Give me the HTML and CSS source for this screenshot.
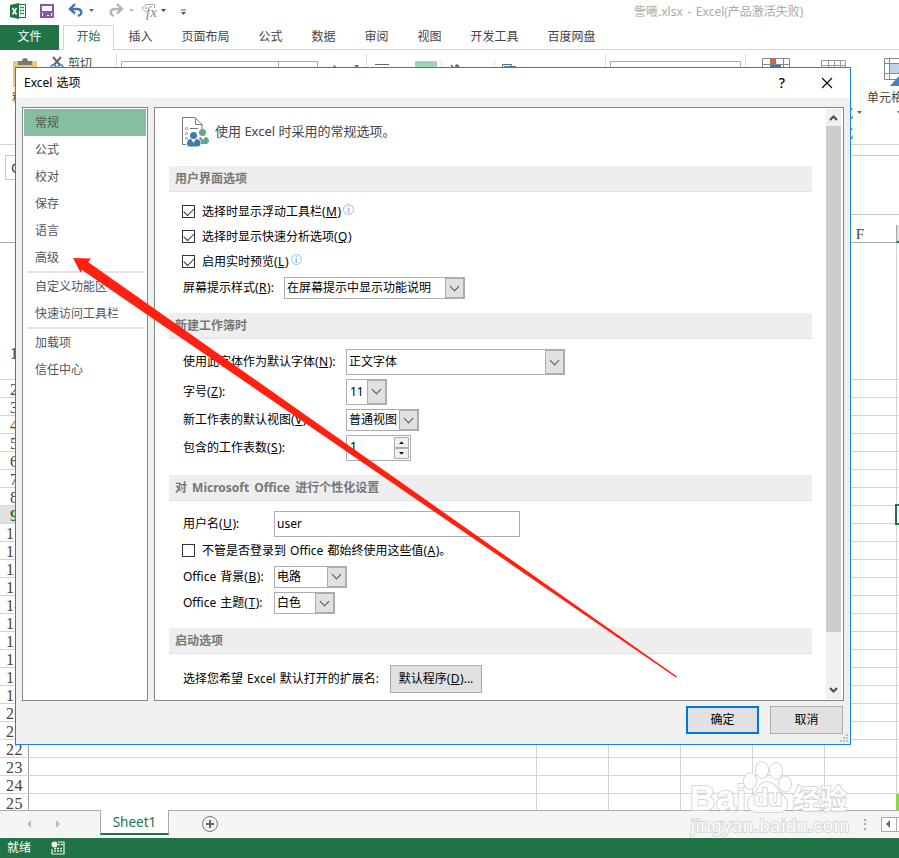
FILE: index.html
```html
<!DOCTYPE html>
<html lang="zh-CN">
<head>
  <meta charset="UTF-8">
  <title>Excel 选项</title>
  <link rel="stylesheet" href="styles.css">
</head>
<body>
  <div class="app">
    <div class="titlebar">
      <svg class="quick-access" width="200" height="25" viewBox="0 0 200 25">
        <!-- excel logo -->
        <path d="M10 5l9-2v16l-9-2z" fill="#217346"/>
        <path d="M12.5 8l4 6.5M16.500 8l-4 6.500" stroke="#fff" stroke-width="1.5"/>
        <path d="M19 4.500h6.500v13H19" fill="#fff" stroke="#217346"/>
        <path d="M20 7.500h4M20 10.500h4M20 13.500h4" stroke="#217346" stroke-width="1.500" stroke-dasharray="1.800 .6"/>
        <!-- save -->
        <path d="M41 5h12v12H41z" fill="#fff" stroke="#8a55ae" stroke-width="2"/>
        <path d="M41 11h12v2H41zM43 13h8v4h-2v-2h-2v2h-4z" fill="#8a55ae"/>
        <!-- undo / redo -->
        <path d="M70 9h7c5 0 6 5 1 7M75 4l-5 5 5 4.500" fill="none" stroke="#3f75b5" stroke-width="2.400"/>
        <path d="M89 9h5l-2.500 3z" fill="#666"/>
        <path d="M122 9h-7c-5 0-6 5-1 7M117 4l5 5-5 4.500" fill="none" stroke="#b5b5b5" stroke-width="2.400"/>
        <path d="M129 9h5l-2.500 3z" fill="#bbb"/>
        <path d="M154.500 8V4.500H146L142 8l4 4h1" fill="none" stroke="#aaa"/>
        <circle cx="146" cy="8" r="1" fill="#aaa"/>
        <text x="146" y="17" class="fx">fx</text>
        <path d="M161 9h5l-2.500 3z" fill="#444"/>
        <path d="M181 10h5" stroke="#555"/>
        <path d="M181 12h5l-2.500 3z" fill="#555"/>
      </svg>
      <span class="doc-title">訾曦.xlsx - Excel(产品激活失败)</span>
    </div>
    <div class="tabs">
      <span class="tab-file">文件</span>
      <span class="tab-active">开始</span>
      <span class="tab">插入</span>
      <span class="tab">页面布局</span>
      <span class="tab">公式</span>
      <span class="tab">数据</span>
      <span class="tab">审阅</span>
      <span class="tab">视图</span>
      <span class="tab">开发工具</span>
      <span class="tab">百度网盘</span>
    </div>
    <svg class="ribbon" width="899" height="94" viewBox="0 0 899 94">
      <path d="M13 11h24v26H13z" fill="#edc57b"/>
      <path d="M18 15v-4h4c0-4 6-4 6 0h4v4z" fill="#777"/>
      <path d="M53 7l7 8M61 7l-7 8" stroke="#666" stroke-width="2"/>
      <path d="M51 17c1-3 4-3 5 0M58 17c1-3 4-3 5 0" fill="none" stroke="#5b8dc5" stroke-width="2"/>
      <text x="68" y="18">剪切</text>
      <text x="12" y="52">粘贴</text>
      <path d="M116.500 4v60M366.500 4v60M441.500 10v60M494.500 10v60M605.500 4v60M745.500 4v60" stroke="#ddd"/>
      <path d="M121.500 30V11.500h196V30M278.500 12v10" fill="none" stroke="#aaa"/>
      <path d="M332 18l2.500-3 2.500 3zM354 15h5l-2 3z" fill="#3f75b5"/>
      <path d="M375 14.500h14" stroke="#666"/>
      <path d="M415 11h22v10h-22z" fill="#9fd5b7"/>
      <path d="M451 15l3 3M455 16l2-1 3 3" stroke="#666" stroke-width="1.500"/>
      <path d="M502.500 20v-5.500h9V20" fill="none" stroke="#666"/>
      <path d="M504 16h12v4h-12z" fill="#4a80bd"/>
      <path d="M610.500 30V11.500h130V30" fill="none" stroke="#aaa"/>
      <path d="M762.500 8.500h27v12h-27zM770.500 9v10M783.500 9v10M763 14.500h26" fill="#fff" stroke="#888"/>
      <path d="M770 9h6v5h-6z" fill="#d9603c"/>
      <path d="M770 15h11v5h-11z" fill="#3f75b5"/>
      <path d="M821.500 20v-9.500h24V20M828.500 11v9M834.500 11v9M840.500 11v9M822 15.500h23" fill="none" stroke="#999"/>
      <path d="M884.500 8.500H905v21h-20.500zM885 13.500h20M885 23.500h20M889.500 9v20" fill="#fff" stroke="#888"/>
      <path d="M890 14h10v9h-10z" fill="#c0d3eb"/>
      <path d="M890 36l8-9h4v9z" fill="#4a80bd"/>
      <text x="867" y="52">单元格</text>
      <text x="841" y="68">式</text>
      <text x="841" y="88">式</text>
      <path d="M857 61h5l-2.500 3zM897 61h5l-2.500 3z" fill="#666"/>
    </svg>
    <div class="formula-bar">
      <div class="name-box">G9</div>
      <div class="formula-input"></div>
    </div>
    <div class="column-heads">
      <span class="corner"></span>
      <span class="column-f">F</span>
      <span class="column-g"></span>
    </div>
    <div class="sheet">
      <div class="sheet-row first"><span>1</span></div>
      <div class="sheet-row"><span>2</span></div>
      <div class="sheet-row"><span>3</span></div>
      <div class="sheet-row"><span>4</span></div>
      <div class="sheet-row"><span>5</span></div>
      <div class="sheet-row"><span>6</span></div>
      <div class="sheet-row"><span>7</span></div>
      <div class="sheet-row"><span>8</span></div>
      <div class="sheet-row current"><span>9</span><i class="cell-cursor"></i></div>
      <div class="sheet-row"><span>10</span></div>
      <div class="sheet-row"><span>11</span></div>
      <div class="sheet-row"><span>12</span></div>
      <div class="sheet-row"><span>13</span></div>
      <div class="sheet-row"><span>14</span></div>
      <div class="sheet-row"><span>15</span></div>
      <div class="sheet-row"><span>16</span></div>
      <div class="sheet-row"><span>17</span></div>
      <div class="sheet-row"><span>18</span></div>
      <div class="sheet-row"><span>19</span></div>
      <div class="sheet-row"><span>20</span></div>
      <div class="sheet-row"><span>21</span></div>
      <div class="sheet-row"><span>22</span></div>
      <div class="sheet-row"><span>23</span></div>
      <div class="sheet-row"><span>24</span></div>
      <div class="sheet-row"><span>25</span><i class="cell-green"></i></div>
    </div>
    <div class="sheet-tabs">
      <svg width="100" height="27" viewBox="0 0 100 27">
        <path d="M31 9v8l-4-4zM56 9v8l4-4z" fill="#bbb"/>
      </svg>
      <span class="sheet-tab">Sheet1</span>
      <svg class="add-sheet" width="18" height="18" viewBox="0 0 18 18">
        <circle cx="9" cy="9" r="7.500" fill="none" stroke="#777"/>
        <path d="M9 5v8M5 9h8" stroke="#666" stroke-width="2"/>
      </svg>
      <svg class="sheet-scroll" width="38" height="27" viewBox="0 0 38 27">
        <path d="M3 8h2v2H3zM3 12h2v2H3zM3 17h2v2H3z" fill="#aaa"/>
        <path d="M20.500 6.500h15v14h-15zM35.500 6.500H45v14h-9.500z" fill="#fff" stroke="#aaa"/>
        <path d="M29 9v8l-4-4z" fill="#666"/>
      </svg>
    </div>
    <div class="statusbar">
      <span>就绪</span>
      <svg width="14" height="14" viewBox="0 0 14 14">
        <circle cx="3.500" cy="3.500" r="3" fill="#e6f0ea"/>
        <path d="M7 1h6v12H1V8" fill="none" stroke="#e6f0ea" stroke-width="1.200"/>
        <path d="M7 3.500h6M3 7.500h9M3 10h9" stroke="#e6f0ea" stroke-width="1.400" stroke-dasharray="2 1"/>
      </svg>
    </div>
  </div>

  <div class="dialog">
    <div class="dialog-title">
      <span class="dialog-name">Excel 选项</span>
      <span class="help">?</span>
      <svg width="12" height="12" viewBox="0 0 12 12"><path d="M1 1l10 10M11 1L1 11" stroke="#000" stroke-width="1.100"/></svg>
    </div>
    <div class="dialog-body">
      <div class="nav">
        <div class="nav-item selected">常规</div>
        <div class="nav-item">公式</div>
        <div class="nav-item">校对</div>
        <div class="nav-item">保存</div>
        <div class="nav-item">语言</div>
        <div class="nav-item">高级</div>
        <div class="nav-line"></div>
        <div class="nav-item">自定义功能区</div>
        <div class="nav-item">快速访问工具栏</div>
        <div class="nav-line"></div>
        <div class="nav-item">加载项</div>
        <div class="nav-item">信任中心</div>
      </div>

      <div class="panel">
        <div class="options">
          <div class="intro">
            <svg width="28" height="32" viewBox="0 0 28 32">
              <path d="M4 28.500H.5v-27H13l7 7V14M13.500 2v6.500H20M8 12.500h8" fill="none" stroke="#777"/>
              <g fill="none" stroke="#888"><circle cx="4.500" cy="12.500" r="1"/><circle cx="4.500" cy="17.500" r="1"/><circle cx="4.500" cy="22.500" r="1"/></g>
              <circle cx="20.500" cy="16.500" r="3.500" fill="#64a68b"/>
              <path d="M16 28c0-5 1-7 3-7l2 3 2-3c3 0 4 2 4 5l-2 2z" fill="#64a68b"/>
              <path d="M4.500 28c0-5 2-6 4.500-6h5c3 0 5 1 5 6l-3 3H8z" fill="#fff"/>
              <circle cx="11.500" cy="19.500" r="4.200" fill="#fff"/>
              <circle cx="11.500" cy="19.500" r="3.500" fill="#4279b5"/>
              <path d="M5 27.500c0-3 1.500-4.500 4-4.500l2.500 4 2.500-4c3 0 4.500 1.500 4.500 4.500 0 2-1 3-3 3h-8c-1.500 0-2.500-1-2.500-3z" fill="#4279b5"/>
            </svg>
            <span>使用 Excel 时采用的常规选项。</span>
          </div>

          <h2>用户界面选项</h2>
          <div class="section section-ui">
            <div class="row">
              <span class="checkbox checked"></span>选择时显示浮动工具栏(<u>M</u>)<span class="info">i</span>
            </div>
            <div class="row">
              <span class="checkbox checked"></span>选择时显示快速分析选项(<u>Q</u>)
            </div>
            <div class="row">
              <span class="checkbox checked"></span>启用实时预览(<u>L</u>)<span class="info">i</span>
            </div>
            <div class="row row-tip">
              <label>屏幕提示样式(<u>R</u>):</label>
              <div class="select tip-style"><span>在屏幕提示中显示功能说明</span><b></b></div>
            </div>
          </div>

          <h2>新建工作簿时</h2>
          <div class="section section-book">
            <div class="row row-font">
              <label>使用此字体作为默认字体(<u>N</u>):</label>
              <div class="select tall font-name"><span>正文字体</span><b></b></div>
            </div>
            <div class="row row-size">
              <label>字号(<u>Z</u>):</label>
              <div class="select tall font-size"><span>11</span><b></b></div>
            </div>
            <div class="row">
              <label>新工作表的默认视图(<u>V</u>):</label>
              <div class="select default-view"><span>普通视图</span><b></b></div>
            </div>
            <div class="row">
              <label>包含的工作表数(<u>S</u>):</label>
              <div class="spinner">
                <span>1</span>
                <svg width="15" height="22" viewBox="0 0 15 22">
                  <path d="M.5.500h14v10H.5zM.5 11.500h14v10H.5z" fill="#f0f0f0" stroke="#acacac"/>
                  <path d="M5 7h5L7.500 4.500zM5 15h5l-2.500 2.500z" fill="#000"/>
                </svg>
              </div>
            </div>
          </div>

          <h2>对 Microsoft Office 进行个性化设置</h2>
          <div class="section section-office">
            <div class="row row-user">
              <label>用户名(<u>U</u>):</label>
              <div class="textbox">user</div>
            </div>
            <div class="row row-always">
              <span class="checkbox"></span>不管是否登录到 Office 都始终使用这些值(<u>A</u>)。
            </div>
            <div class="row row-back">
              <label>Office 背景(<u>B</u>):</label>
              <div class="select background"><span>电路</span><b></b></div>
            </div>
            <div class="row row-theme">
              <label>Office 主题(<u>T</u>):</label>
              <div class="select theme"><span>白色</span><b></b></div>
            </div>
          </div>

          <h2>启动选项</h2>
          <div class="section section-start">
            <div class="row">
              <label>选择您希望 Excel 默认打开的扩展名:</label>
              <div class="button programs">默认程序(<u>D</u>)...</div>
            </div>
          </div>
        </div>

        <div class="scrollbar">
          <svg width="15" height="17" viewBox="0 0 15 17"><path d="M4 11l3.500-3.500L11 11" fill="none" stroke="#505050" stroke-width="2.200"/></svg>
          <div class="thumb"></div>
          <svg width="15" height="17" viewBox="0 0 15 17"><path d="M4 6l3.500 3.500L11 6" fill="none" stroke="#505050" stroke-width="2.200"/></svg>
        </div>
      </div>
    </div>
    <div class="dialog-actions">
      <div class="button primary">确定</div>
      <div class="button">取消</div>
    </div>
    <svg class="grip" width="8" height="8" viewBox="0 0 8 8">
      <path d="M6 0h2v2H6zM3 3h2v2H3zM6 3h2v2H6zM0 6h2v2H0zM3 6h2v2H3zM6 6h2v2H6z" fill="#bfbfbf"/>
    </svg>
  </div>

  <svg class="watermark" width="180" height="90" viewBox="0 0 180 90">
    <text class="wm-brand" x="-21" y="60" textLength="56">Bai</text>
    <g class="wm-shape">
      <ellipse cx="39" cy="31" rx="6" ry="8"/>
      <ellipse cx="51" cy="20" rx="6" ry="8"/>
      <ellipse cx="65" cy="21" rx="6" ry="8"/>
      <ellipse cx="74" cy="34" rx="6" ry="7.500"/>
      <path d="M56 32c8 0 10 9 16 14 7 6 5 16-4 16H46c-10 0-12-10-5-16 6-5 7-14 15-14z"/>
    </g>
    <text class="wm-du" x="43" y="56">du</text>
    <text class="wm-cjk" x="82" y="59">经验</text>
    <text class="wm-url" x="-20" y="82" textLength="158">jingyan.baidu.com</text>
  </svg>

  <svg class="arrow" width="620" height="430" viewBox="65 250 620 430">
    <path d="M73 258L91 258.500 88 262 677 676.500 676 677.500 82 270 80.500 272.500z" fill="#ff2010"/>
  </svg>
</body>
</html>
```
FILE: styles.css
```css
* {
  box-sizing: border-box;
}
body {
  margin: 0;
  width: 899px;
  height: 858px;
  overflow: hidden;
  position: relative;
  background: #fff;
  color: #000;
  font: 12px/18px "Noto Sans", "Noto Sans CJK SC", sans-serif;
  white-space: nowrap;
}
svg {
  display: block;
  flex: none;
}

/* workbook window */
.app {
  display: flex;
  flex-direction: column;
  height: 858px;
  color: #444;
}
.titlebar {
  display: flex;
  height: 25px;
}
.fx {
  font: italic 15px "Liberation Serif", serif;
  fill: #888;
}
.doc-title {
  margin-left: 434px;
  line-height: 24px;
  color: #aaa;
  word-spacing: 1.5px;
}
.tabs {
  display: flex;
  height: 25px;
  line-height: 23px;
  border-bottom: 1px solid #d4d4d4;
}
.tab-file {
  width: 59px;
  height: 25px;
  background: #217346;
  color: #fff;
  text-align: center;
}
.tab-active {
  width: 51px;
  height: 25px;
  margin: 0 0 0 4px;
  border: 1px solid #d4d4d4;
  border-bottom: 0;
  background: #fff;
  color: #217346;
  text-align: center;
  line-height: 22px;
}
.tab {
  padding: 0 14.5px;
}
.ribbon {
  font-size: 12px;
  fill: #444;
}
.formula-bar {
  display: flex;
  justify-content: space-between;
  height: 71px;
  padding: 10px 0 0 5px;
  border-top: 1px solid #d4d4d4;
}
.name-box {
  width: 90px;
  height: 25px;
  padding-left: 5px;
  border: 1px solid #c6c6c6;
  line-height: 24px;
  font-size: 14px;
}
.formula-input {
  width: 780px;
  height: 60px;
  border: 1px solid #c6c6c6;
  border-right: 0;
}
.column-heads {
  display: flex;
  height: 28px;
  border-bottom: 1px solid #ababab;
  font: 15px/39px "Liberation Serif", serif;
}
.corner {
  width: 824px;
}
.column-f {
  width: 72px;
  text-align: center;
}
.column-g {
  width: 3px;
  height: 18px;
  margin-top: 10px;
  background: #dedede;
  border-left: 1px solid #aaa;
  border-bottom: 2px solid #217346;
}
.sheet {
  height: 567px;
  overflow: hidden;
}
.sheet-row {
  display: flex;
  justify-content: space-between;
  height: 18px;
  border-bottom: 1px solid #d4d4d4;
  /* column edges, B onwards are 72px wide */
  background: repeating-linear-gradient(90deg, #d4d4d4 0 1px, transparent 1px 72px) 536px 0 no-repeat;
  font: 16px/20px "Liberation Serif", serif;
}
.sheet-row span {
  width: 29px;
  padding-left: 6px;
  border-right: 1px solid #a0a0a0;
  letter-spacing: .5px;
}
.sheet-row:nth-child(-n+9) span {
  padding-left: 10px;
}
.sheet-row.first {
  height: 137px;
  line-height: 222px;
}
.sheet-row.current span {
  background: #e1e1e1;
  color: #217346;
  font-weight: bold;
}
.cell-cursor {
  width: 4px;
  height: 21px;
  margin-top: -2px;
  border: 2px solid #217346;
  border-right: 0;
}
.cell-green {
  width: 3px;
  background: #92d050;
}
.sheet-tabs {
  display: flex;
  height: 28px;
  border-top: 1px solid #ababab;
  background: #f5f5f5;
}
.sheet-tab {
  width: 69px;
  height: 25px;
  margin-top: -1px;
  border: 1px solid #ababab;
  border-top: 0;
  border-bottom: 2px solid #217346;
  background: #fff;
  color: #217346;
  text-align: center;
  font-size: 13.5px;
  line-height: 25px;
}
.add-sheet {
  margin: 4px 0 0 32px;
}
.sheet-scroll {
  margin-left: auto;
}
.statusbar {
  display: flex;
  align-items: center;
  gap: 20px;
  height: 20px;
  padding-left: 7px;
  background: #217346;
  color: #fff;
}

/* options dialog */
.dialog {
  position: absolute;
  left: 15px;
  top: 67px;
  width: 836px;
  height: 678px;
  border: 1px solid #1883d7;
  background: #f0f0f0;
  word-spacing: 1px;
}
.dialog-title {
  display: flex;
  align-items: center;
  height: 30px;
  padding: 0 17px 0 8px;
  background: #fff;
}
.help {
  margin: 0 36px 0 auto;
  font-size: 14px;
  font-weight: 500;
}
.dialog-body {
  display: flex;
  gap: 6px;
  padding: 9px 6px 0;
}
.nav {
  width: 126px;
  height: 594px;
  padding: 1px;
  border: 1px solid #828790;
  background: #fff;
  color: #555;
}
.nav-item {
  height: 27px;
  padding-left: 11px;
  line-height: 27px;
}
.nav-item.selected {
  background: #86bfa0;
}
.nav-line {
  height: 2px;
  margin: 0 3px;
  background: #e2e3e4;
}
.panel {
  display: flex;
  justify-content: space-between;
  width: 690px;
  height: 594px;
  padding-right: 2px;
  border: 1px solid #828790;
  background: #fff;
}
.options {
  width: 657px;
  padding-left: 14px;
}
.intro {
  display: flex;
  gap: 5px;
  height: 58px;
  padding: 8px 0 0 13px;
  color: #444;
  font-size: 13px;
  line-height: 31px;
  word-spacing: 0;
}
h2 {
  height: 26px;
  margin: 0;
  padding-left: 6px;
  border-bottom: 1px solid #dfe0e3;
  background: #eee;
  color: #777;
  font-size: 12px;
  line-height: 25px;
  word-spacing: 2px;
}
.section {
  padding-left: 14px;
}
.section-ui {
  height: 121px;
  padding-top: 7px;
}
.section-book {
  height: 136px;
  padding-top: 8px;
}
.section-office {
  height: 127px;
  padding-top: 9px;
}
.section-start {
  padding-top: 10px;
}
.row {
  display: flex;
  align-items: center;
  height: 25px;
}
.row-tip {
  height: 28px;
}
.row-font {
  height: 30px;
}
.row-size {
  height: 29px;
}
.section-book .row:nth-child(n+3),
.row-user {
  height: 28px;
}
.row-back {
  height: 27px;
}
.row-theme {
  height: 26px;
}
.section-start .row {
  height: 30px;
}
.section-ui label {
  width: 101px;
}
.section-book label {
  width: 163px;
}
.section-office label {
  width: 91px;
}
.section-start label {
  width: 207px;
}
.row u {
  padding: 0 .5px;
}
.checkbox {
  width: 13px;
  height: 13px;
  margin: 0 7px 0 -1px;
  border: 1px solid #333;
}
.checkbox.checked::before {
  content: "";
  display: block;
  width: 9px;
  height: 5px;
  margin: 2px 0 0 1px;
  border: solid #333;
  border-width: 0 0 1px 1px;
  transform: translateY(-.5px) rotate(-45deg);
}
.info {
  width: 11px;
  height: 11px;
  margin: -4px 0 0 2px;
  border: 1px solid #9dbbe3;
  border-radius: 50%;
  color: #3f75b5;
  text-align: center;
  font: 8px/9px "Noto Sans", sans-serif;
}
.select {
  display: flex;
  justify-content: space-between;
  height: 22px;
  border: 1px solid #abadb3;
  background: #fff;
  line-height: 20px;
}
.select.tall {
  height: 26px;
  line-height: 23px;
}
.select span {
  padding-left: 2px;
}
.select b {
  display: flex;
  align-items: center;
  justify-content: center;
  width: 19px;
  border: 1px solid #abadb3;
  background: #e1e1e1;
}
.select b::before {
  content: "";
  width: 6px;
  height: 6px;
  margin-top: -4px;
  border: solid #555;
  border-width: 0 1px 1px 0;
  transform: rotate(45deg);
}
.tip-style {
  width: 181px;
}
.font-name {
  width: 219px;
}
.font-size {
  width: 41px;
}
.font-size span {
  padding-left: 3px;
}
.default-view {
  width: 73px;
}
.background {
  width: 73px;
}
.theme {
  width: 61px;
}
.spinner {
  display: flex;
  justify-content: space-between;
  width: 65px;
  height: 26px;
  padding: 1px 1px 0 3px;
  border: 1px solid #abadb3;
  line-height: 20px;
}
.textbox {
  width: 246px;
  height: 26px;
  padding-left: 2px;
  border: 1px solid #abadb3;
  line-height: 23px;
}
.scrollbar {
  display: flex;
  flex-direction: column;
  width: 15px;
  margin: 1px 0;
  background: #f0f0f0;
}
.thumb {
  height: 506px;
  margin-bottom: auto;
  background: #cdcdcd;
}
.button {
  width: 73px;
  height: 28px;
  border: 1px solid #adadad;
  background: #e1e1e1;
  text-align: center;
  line-height: 26px;
}
.button.primary {
  border: 2px solid #0078d7;
  line-height: 24px;
}
.button.programs {
  width: 92px;
}
.dialog-actions {
  display: flex;
  justify-content: flex-end;
  gap: 11px;
  padding: 5px 7px 0;
}
.grip {
  position: absolute;
  right: 2px;
  bottom: 2px;
}

/* overlays */
.watermark {
  position: absolute;
  left: 711px;
  top: 750px;
  overflow: visible;
  fill: #fff;
  stroke: #d0d0d0;
  stroke-width: 2px;
  paint-order: stroke;
  opacity: .85;
  font-family: "Liberation Sans", "Noto Sans CJK SC", sans-serif;
  font-weight: bold;
}
.wm-brand {
  font-size: 35px;
}
.wm-du {
  font-size: 23px;
}
.wm-cjk {
  font-size: 27px;
}
.wm-url {
  font-size: 18px;
  font-weight: normal;
}
.arrow {
  position: absolute;
  left: 65px;
  top: 250px;
}
```
